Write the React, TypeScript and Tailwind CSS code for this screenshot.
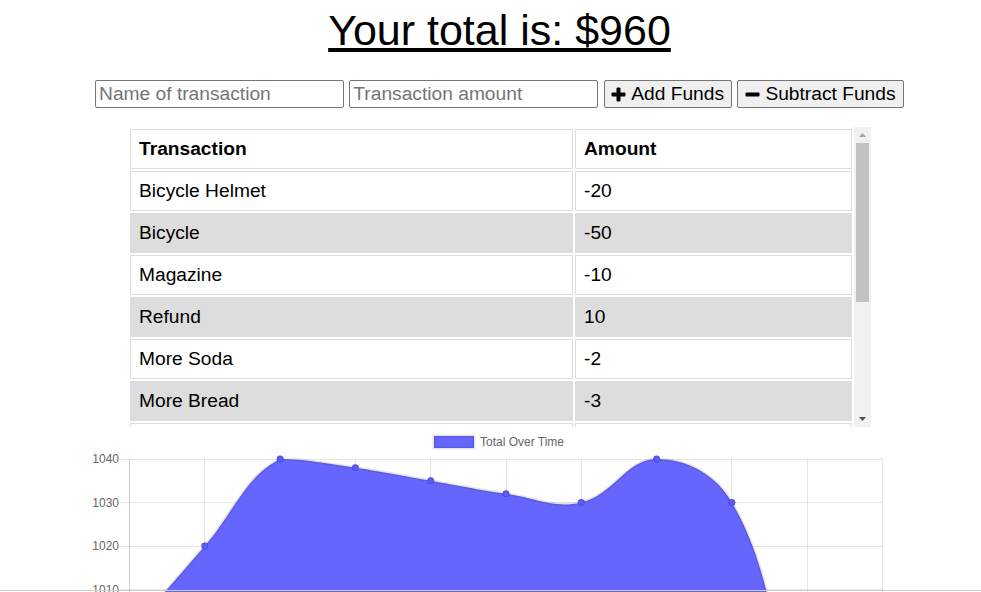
import React from "react";

const rows: [string, string][] = [
  ["Bicycle Helmet", "-20"],
  ["Bicycle", "-50"],
  ["Magazine", "-10"],
  ["Refund", "10"],
  ["More Soda", "-2"],
  ["More Bread", "-3"],
  ["Soda", "-3"],
  ["Bread", "-2"],
  ["Paycheck", "20"],
  ["Savings", "20"],
];

const data = [1000, 1020, 1040, 1038, 1035, 1032, 1030, 1040, 1030, 980, 960];

function Chart() {
  const left = 129.5;
  const right = 882.5;
  const top = 459;
  const per = 4.35;
  const bottom = top + 80 * per;
  const step = (right - left) / 10;
  const pts = data.map((v, i) => ({ x: left + i * step, y: top + (1040 - v) * per }));
  const clamp = (p: { x: number; y: number }) => ({
    x: Math.min(right, Math.max(left, p.x)),
    y: Math.min(bottom, Math.max(top, p.y)),
  });
  const t = 0.4;
  const cps = pts.map((cur, i) => {
    const prev = pts[Math.max(0, i - 1)];
    const next = pts[Math.min(pts.length - 1, i + 1)];
    const d01 = Math.hypot(cur.x - prev.x, cur.y - prev.y);
    const d12 = Math.hypot(next.x - cur.x, next.y - cur.y);
    let s01 = d01 / (d01 + d12);
    let s12 = d12 / (d01 + d12);
    if (isNaN(s01)) s01 = 0;
    if (isNaN(s12)) s12 = 0;
    const fa = t * s01;
    const fb = t * s12;
    return {
      prev: clamp({ x: cur.x - fa * (next.x - prev.x), y: cur.y - fa * (next.y - prev.y) }),
      next: clamp({ x: cur.x + fb * (next.x - prev.x), y: cur.y + fb * (next.y - prev.y) }),
    };
  });
  let line = `M${pts[0].x},${pts[0].y}`;
  for (let i = 1; i < pts.length; i++) {
    const a = cps[i - 1].next;
    const b = cps[i].prev;
    line += ` C${a.x},${a.y} ${b.x},${b.y} ${pts[i].x},${pts[i].y}`;
  }
  const area = `${line} L${pts[pts.length - 1].x},${bottom} L${pts[0].x},${bottom} Z`;
  const ticks = [1040, 1030, 1020, 1010, 1000, 990, 980, 970, 960];
  const crisp = (v: number) => Math.round(v - 0.5) + 0.5;

  return (
    <svg width={963} height={165} viewBox="18 427 963 165" className="block">
      {/* legend */}
      <rect x={434} y={436} width={40} height={12} fill="#6666ff" stroke="rgba(0,0,0,0.1)" strokeWidth={3} />
      <text x={480} y={446} fontSize={12} fill="#666" fontFamily="'Liberation Sans', Arial, sans-serif">
        Total Over Time
      </text>
      {/* grid */}
      {pts.map((p, i) => (
        <line
          key={`v${i}`}
          x1={crisp(p.x)}
          x2={crisp(p.x)}
          y1={top}
          y2={bottom + 10}
          stroke={i === 0 ? "rgba(0,0,0,0.2)" : "rgba(0,0,0,0.1)"}
          strokeWidth={1}
        />
      ))}
      {ticks.map((v) => {
        const y = top + (1040 - v) * per;
        return (
          <g key={`h${v}`}>
            <line x1={119.5} x2={right} y1={crisp(y)} y2={crisp(y)} stroke="rgba(0,0,0,0.1)" strokeWidth={1} />
            <text
              x={119}
              y={y + 4}
              fontSize={12}
              fill="#666"
              textAnchor="end"
              fontFamily="'Liberation Sans', Arial, sans-serif"
            >
              {v}
            </text>
          </g>
        );
      })}
      {/* area */}
      <path d={area} fill="#6666ff" />
      <path d={line} fill="none" stroke="rgba(0,0,0,0.1)" strokeWidth={3} />
      {pts.map((p, i) => (
        <circle key={`p${i}`} cx={p.x} cy={p.y} r={3.2} fill="#5c5cf2" stroke="rgba(60,60,220,0.6)" strokeWidth={1} />
      ))}
    </svg>
  );
}

function PlusIcon() {
  return (
    <svg width="15" height="15" viewBox="0 0 15 15" className="shrink-0">
      <rect x="5.5" y="0.5" width="4" height="14" rx="1" fill="#000" />
      <rect x="0.5" y="5.5" width="14" height="4" rx="1" fill="#000" />
    </svg>
  );
}

function MinusIcon() {
  return (
    <svg width="15" height="15" viewBox="0 0 15 15" className="shrink-0">
      <rect x="0.5" y="5.5" width="14" height="4" rx="1" fill="#000" />
    </svg>
  );
}

export default function App() {
  return (
    <div className="h-screen overflow-hidden bg-white pl-[18px] font-['Liberation_Sans',Arial,sans-serif] text-black">
      <h1 className="pt-[6px] text-center text-[43px] leading-[49px] underline">Your total is: $960</h1>

      <div className="mt-[25px] flex justify-center gap-[5.3px] text-[19.2px]">
        <input
          placeholder="Name of transaction"
          className="h-[28px] w-[249px] rounded-[2px] border border-[#767676] px-[3px] leading-[22px] placeholder:text-[#757575]"
        />
        <input
          placeholder="Transaction amount"
          className="h-[28px] w-[249px] rounded-[2px] border border-[#767676] px-[3px] leading-[22px] placeholder:text-[#757575]"
        />
        <button className="flex h-[28px] w-[128px] items-center justify-center gap-[5px] rounded-[2px] border border-[#767676] bg-[#efefef] leading-[22px]">
          <PlusIcon />
          <span>Add Funds</span>
        </button>
        <button className="flex h-[28px] w-[167px] items-center justify-center gap-[5px] rounded-[2px] border border-[#767676] bg-[#efefef] leading-[22px]">
          <MinusIcon />
          <span>Subtract Funds</span>
        </button>
      </div>

      <div className="mx-auto mt-[19px] flex h-[300px] w-[743px]">
        <div className="h-[300px] w-[726px] overflow-hidden">
          <table className="w-[726px] table-fixed border-separate border-spacing-[2px] text-[19.2px] leading-[22px]">
            <colgroup>
              <col className="w-[443px]" />
              <col className="w-[277px]" />
            </colgroup>
            <thead>
              <tr>
                <th className="h-[40px] border border-[#ddd] p-[8px] text-left font-bold">Transaction</th>
                <th className="h-[40px] border border-[#ddd] p-[8px] text-left font-bold">Amount</th>
              </tr>
            </thead>
            <tbody>
              {rows.map(([name, amt], i) => (
                <tr key={i} className={i % 2 === 1 ? "bg-[#ddd]" : "bg-white"}>
                  <td className="h-[40px] border border-[#ddd] p-[8px]">{name}</td>
                  <td className="h-[40px] border border-[#ddd] p-[8px]">{amt}</td>
                </tr>
              ))}
            </tbody>
          </table>
        </div>
        <div className="flex w-[17px] flex-col bg-[#f1f1f1]">
          <div className="flex h-[16px] items-center justify-center">
            <svg width="7" height="4" viewBox="0 0 7 4">
              <polygon points="3.5,0 7,4 0,4" fill="#a3a3a3" />
            </svg>
          </div>
          <div className="mx-[2px] h-[159px] bg-[#c1c1c1]" />
          <div className="flex-1" />
          <div className="flex h-[17px] items-center justify-center">
            <svg width="7" height="4" viewBox="0 0 7 4">
              <polygon points="0,0 7,0 3.5,4" fill="#505050" />
            </svg>
          </div>
        </div>
      </div>

      <Chart />

      <div className="fixed bottom-[1px] left-0 right-0 h-px bg-[#cfcfcf]" />
    </div>
  );
}
